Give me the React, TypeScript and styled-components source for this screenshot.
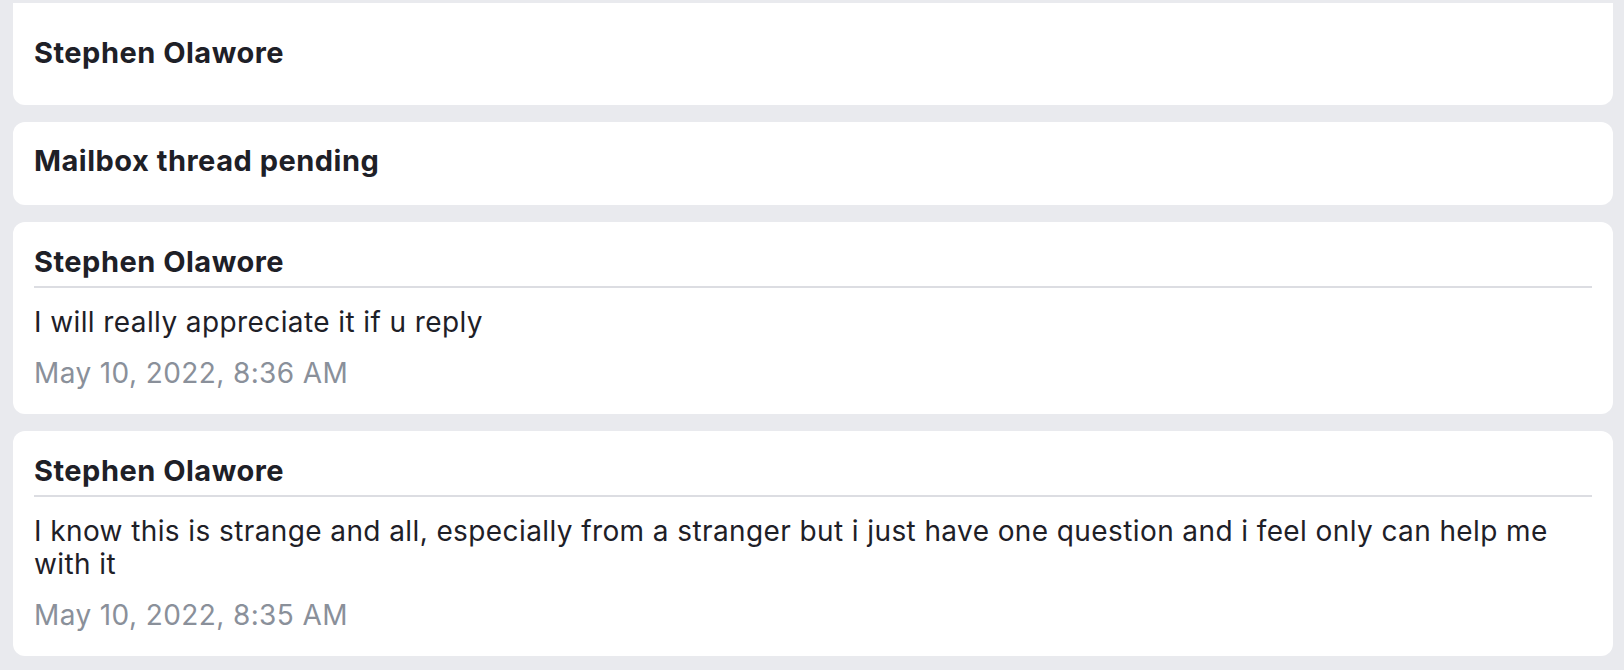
import styled, { createGlobalStyle } from "styled-components";

interface MessageI {
  sender: string;
  body: string;
  date: string;
}

const messages: MessageI[] = [
  {
    sender: "Stephen Olawore",
    body: "I will really appreciate it if u reply",
    date: "May 10, 2022, 8:36 AM",
  },
  {
    sender: "Stephen Olawore",
    body: "I know this is strange and all, especially from a stranger but i just have one question and i feel only can help me with it",
    date: "May 10, 2022, 8:35 AM",
  },
];

const App = () => {
  return (
    <>
      <GlobalStyle />
      <List>
        <Card $clipped $pad="34px 21px 36px">
          <Title>Stephen Olawore</Title>
        </Card>

        <Card $pad="23px 21px 28px">
          <Title>Mailbox thread pending</Title>
        </Card>

        {messages.map((m, index) => (
          <Card key={index} $pad="24px 21px 25px">
            <Header>
              <Title>{m.sender}</Title>
            </Header>
            <Body>{m.body}</Body>
            <Stamp>{m.date}</Stamp>
          </Card>
        ))}
      </List>
    </>
  );
};

export default App;

const GlobalStyle = createGlobalStyle`
  html, body {
    margin: 0;
    padding: 0;
    background-color: #e9eaee;
  }

  body {
    font-family: Inter, "Noto Sans", sans-serif;
    color: #1e2027;
  }
`;

const List = styled.div`
  display: flex;
  flex-direction: column;
  gap: 17px;
  padding: 3px 11px 14px 13px;
`;

const Card = styled.div<{ $clipped?: boolean; $pad: string }>`
  display: flex;
  flex-direction: column;
  background-color: #ffffff;
  padding: ${(p) => p.$pad};
  border-radius: ${(p) => (p.$clipped ? "0 0 12px 12px" : "12px")};
`;

const Header = styled.div`
  padding-bottom: 8px;
  border-bottom: 2px solid #dcdde2;
`;

const Title = styled.div`
  font-size: 29px;
  line-height: 32px;
  font-weight: 700;
  letter-spacing: 0.5px;
  color: #1e2027;
`;

const Body = styled.div`
  margin-top: 18px;
  padding-right: 24px;
  font-size: 28px;
  line-height: 33px;
  letter-spacing: 0.4px;
  color: #1e2027;
`;

const Stamp = styled.div`
  margin-top: 18px;
  font-size: 28px;
  line-height: 32px;
  letter-spacing: 0.4px;
  color: #8a909a;
`;
